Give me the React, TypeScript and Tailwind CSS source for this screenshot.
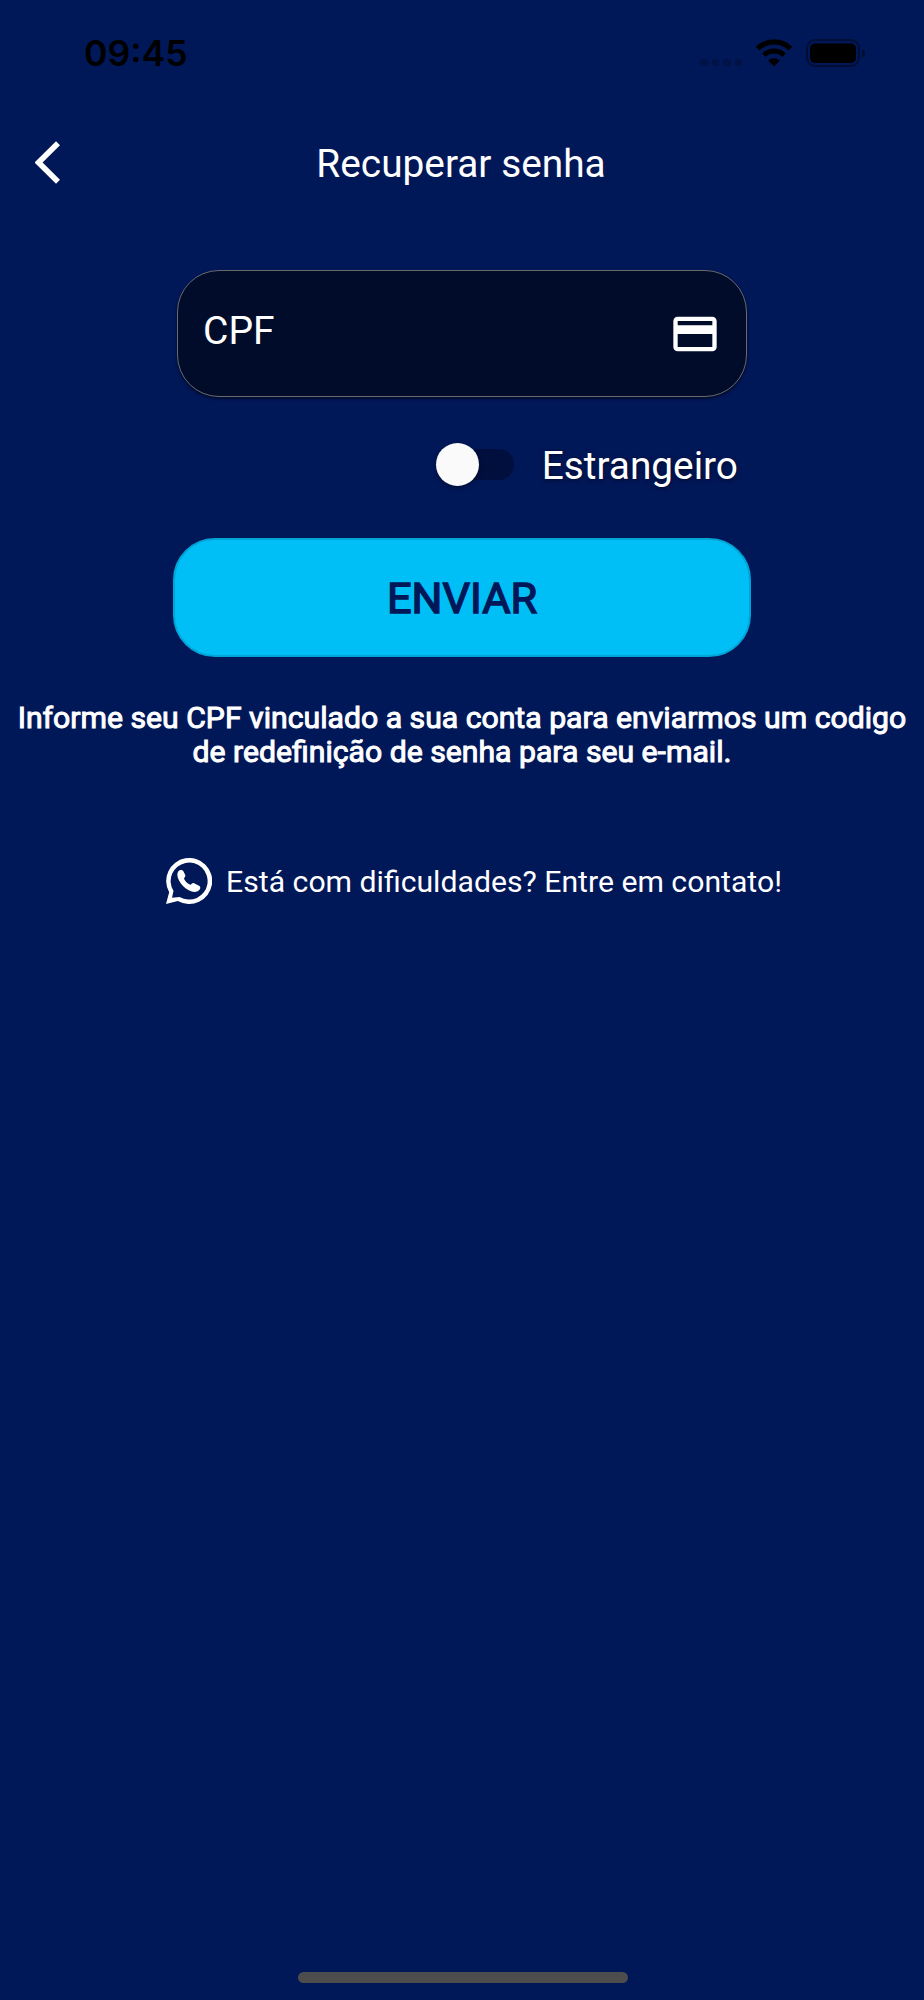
import { useState } from "react";

function StatusBar() {
  return (
    <div className="flex h-[117px] items-start justify-between pl-[84px] pr-[58px] text-black">
      <span className="mt-[33px] font-['Inter',sans-serif] text-[35.6px] leading-[42px] font-semibold">
        09:45
      </span>
      <div className="mt-[38.5px] flex h-[28px]">
        {/* sinal */}
        <div className="mt-[20px] flex gap-[4px]">
          <span className="h-[7.5px] w-[7.5px] rounded-[3px] bg-black/20" />
          <span className="h-[7.5px] w-[7.5px] rounded-[3px] bg-black/20" />
          <span className="h-[7.5px] w-[7.5px] rounded-[3px] bg-black/20" />
          <span className="h-[7.5px] w-[7.5px] rounded-[3px] bg-black/20" />
        </div>
        {/* wifi */}
        <svg className="ml-[13px] h-[28px] w-[38px]" viewBox="0 0 38 28" fill="none">
          <path d="M2.6 9.6A23.4 23.4 0 0 1 35.4 9.6" stroke="#000" strokeWidth="5.2" />
          <path d="M8.8 16.1A14.6 14.6 0 0 1 29.2 16.1" stroke="#000" strokeWidth="5" />
          <path d="M19 27.6L13.2 21.6A8.2 8.2 0 0 1 24.8 21.6Z" fill="#000" />
        </svg>
        {/* bateria */}
        <svg className="ml-[13px] h-[28px] w-[60px]" viewBox="0 0 60 28">
          <rect x="1" y="1" width="52" height="26" rx="8" fill="none" stroke="#000" strokeOpacity="0.4" strokeWidth="2" />
          <rect x="4" y="4.5" width="46" height="19.5" rx="5" fill="#000" />
          <path d="M56 10C58 10.8 59 12.4 59 14.3S58 17.8 56 18.6Z" fill="#000" fillOpacity="0.45" />
        </svg>
      </div>
    </div>
  );
}

function Header() {
  return (
    <header className="grid h-[92px] grid-cols-[100px_1fr_100px] items-center">
      <button aria-label="Voltar" className="mb-[2px] ml-[35px] w-[26px]">
        <svg className="h-[43px] w-[26px]" viewBox="0 0 26 43" fill="none">
          <path d="M23 2.3L3.6 21.5L23 40.7" stroke="#fff" strokeWidth="5.6" />
        </svg>
      </button>
      <h1 className="pt-[1px] pr-[2px] text-center text-[38.8px] leading-[46px]">Recuperar senha</h1>
    </header>
  );
}

function WhatsappIcon() {
  return (
    <svg className="h-[46px] w-[46px]" viewBox="0 0 138 138" fill="#fff">
      <path
        fillRule="evenodd"
        d="M0 138L9.5 103A69 69 0 1 1 35.5 129ZM18 119.5L41 117A55.5 55.5 0 1 0 22.5 99Z"
      />
      <path d="M34 50C34 43 38 37 43 36C48 35 51 37 53 41L58 52C59 56 54 60 54 62C58 70 65 77 73 80C76 80 79 74 83 75L99 83C103 85 104 89 102 93C99 99 92 102 85 102C75 102 62 95 51 84C41 73 34 60 34 50Z" />
    </svg>
  );
}

export default function App() {
  const [foreigner, setForeigner] = useState(false);

  return (
    <div className="flex h-[2000px] w-[924px] flex-col bg-[#001758] font-['Roboto',sans-serif] text-white">
      <StatusBar />
      <Header />

      <main className="flex flex-1 flex-col items-center">
        {/* CPF */}
        <div className="mt-[61px] flex h-[127px] w-[570px] items-center justify-between rounded-[42px] border border-[#6a6a6a] bg-[#000c2a] pr-[25px] pl-[25px] shadow-[0_2px_3px_rgba(0,0,0,0.5)]">
          <span className="mb-[6px] text-[39px] leading-[46px]">CPF</span>
          <svg className="h-[52px] w-[52px]" viewBox="0 0 24 24" fill="#fff">
            <path d="M20 4H4c-1.11 0-1.99.89-1.99 2L2 18c0 1.11.89 2 2 2h16c1.11 0 2-.89 2-2V6c0-1.11-.89-2-2-2zm0 14H4v-6h16v6zm0-10H4V6h16v2z" />
          </svg>
        </div>

        {/* Estrangeiro */}
        <div className="mt-[43px] flex h-[48px] w-[570px] items-center justify-end pr-[9px]">
          <button
            role="switch"
            aria-checked={foreigner}
            aria-label="Estrangeiro"
            onClick={() => setForeigner(!foreigner)}
            className="flex h-[31px] w-[71px] items-center rounded-full bg-[#000f3e]"
          >
            <span
              className={`h-[43px] w-[43px] shrink-0 rounded-full bg-[#fafafa] shadow-[0_2px_4px_rgba(0,0,0,0.35)] transition ${
                foreigner ? "translate-x-[35px]" : "-translate-x-[7px]"
              }`}
            />
          </button>
          <span className="ml-[28px] pt-[3px] text-[38.8px] leading-[46px] [text-shadow:0_1px_4px_rgba(0,0,0,0.6)]">
            Estrangeiro
          </span>
        </div>

        <button className="mt-[50px] h-[119px] w-[578px] rounded-[42px] border-2 border-[#00a5d8] bg-[#00bff6] pt-[2px] text-[43.3px] leading-[52px] text-[#001758] [-webkit-text-stroke:1.5px_#001758]">
          ENVIAR
        </button>

        <p className="mt-[44px] text-center text-[30.2px] leading-[34px] [-webkit-text-stroke:1px_#fff]">
          Informe seu CPF vinculado a sua conta para enviarmos um codigo
          <br />
          de redefinição de senha para seu e-mail.
        </p>

        {/* Contato */}
        <a href="#" className="mt-[89px] flex h-[46px] items-center pl-[24px] text-[30.2px]">
          <WhatsappIcon />
          <span className="mt-[2px] ml-[14px]">Está com dificuldades? Entre em contato!</span>
        </a>
      </main>

      <div className="mb-[17px] ml-[1px] h-[11px] w-[330px] self-center rounded-full bg-[#4d4d4d]" />
    </div>
  );
}
